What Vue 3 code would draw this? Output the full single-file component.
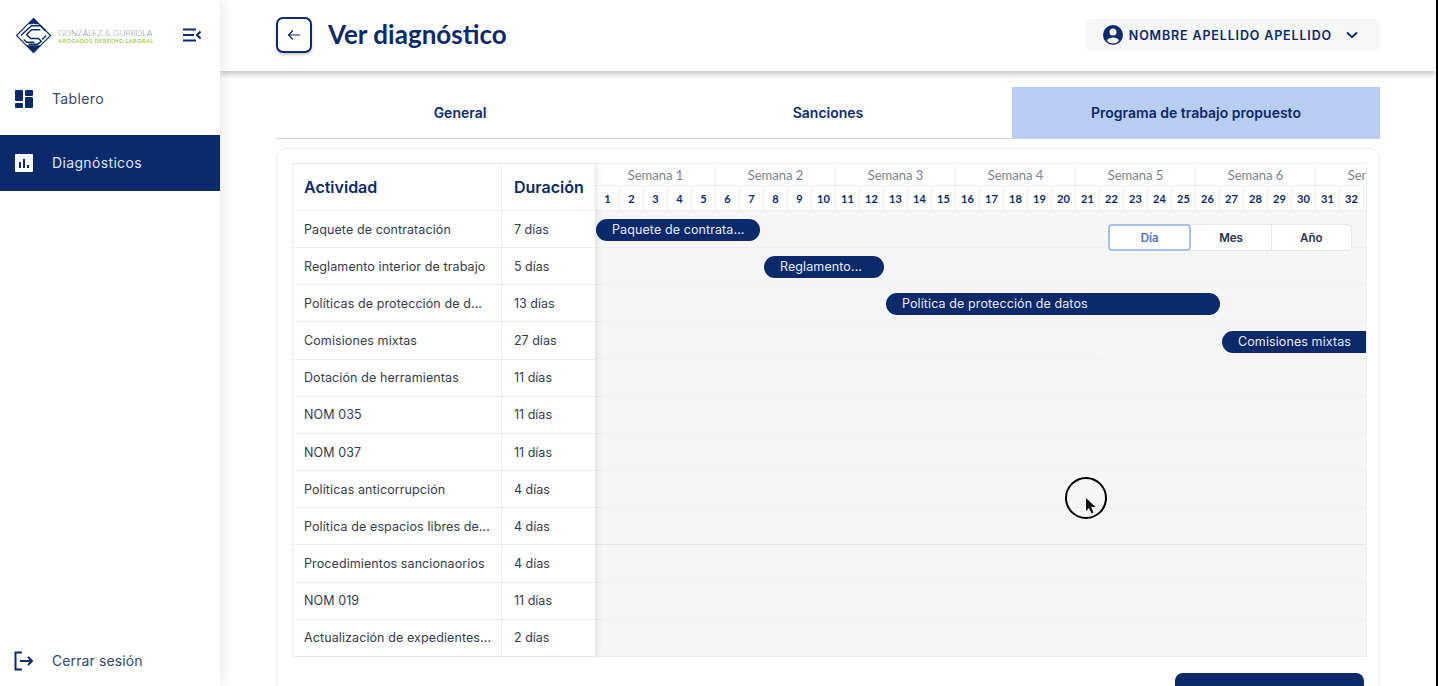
<template>
  <div class="app">
    <aside class="sidebar">
      <div class="brand">
        <svg class="logo" viewBox="0 0 38 38" width="37" height="37">
          <path d="M19 1.500 36.500 19 19 36.500 1.500 19Z" fill="#fff" stroke="#0a2a6c" stroke-width="1.200" />
          <path d="M19 1 25 7.500H20L19 6.500 18 7.500H13Z" fill="#0a2a6c" />
          <path d="M11 29H27L19 37Z" fill="#0a2a6c" />
          <path d="M6 19 17 9H26L31 14" fill="none" stroke="#0a2a6c" stroke-width="1.500" />
          <path d="M26 13H17L12 18 16 22H24L27 25 23 28H14" fill="none" stroke="#0a2a6c" stroke-width="1.500" />
          <path d="M9 23 12 26H20M32 19 28 23" fill="none" stroke="#0a2a6c" stroke-width="1.500" />
        </svg>
        <div class="brand-text">
          <div class="brand-name">GONZÁLEZ &amp; GURROLA</div>
          <div class="brand-sub">ABOGADOS DERECHO LABORAL</div>
        </div>
        <svg class="collapse" viewBox="0 0 18 14" width="18" height="14">
          <path d="M0 1.500h13M0 7h11M0 12.500h13" stroke="#0a2a6c" stroke-width="2" fill="none" />
          <path d="M17.500 3.500 14 7l3.500 3.500" stroke="#0a2a6c" stroke-width="2" fill="none" />
        </svg>
      </div>

      <nav class="nav">
        <a class="nav-item">
          <svg viewBox="0 0 18 18" width="18" height="18">
            <path fill="#0a2a6c" d="M0 1a1 1 0 0 1 1-1h6a1 1 0 0 1 1 1v9a1 1 0 0 1-1 1H1a1 1 0 0 1-1-1ZM10 1a1 1 0 0 1 1-1h6a1 1 0 0 1 1 1v4a1 1 0 0 1-1 1h-6a1 1 0 0 1-1-1ZM10 8a1 1 0 0 1 1-1h6a1 1 0 0 1 1 1v9a1 1 0 0 1-1 1h-6a1 1 0 0 1-1-1ZM0 14a1 1 0 0 1 1-1h6a1 1 0 0 1 1 1v3a1 1 0 0 1-1 1H1a1 1 0 0 1-1-1Z" />
          </svg>
          <span>Tablero</span>
        </a>
        <a class="nav-item active">
          <svg viewBox="0 0 18 18" width="18" height="18">
            <path fill="#fff" fill-rule="evenodd" d="M1 0h16a1 1 0 0 1 1 1v16a1 1 0 0 1-1 1H1a1 1 0 0 1-1-1V1a1 1 0 0 1 1-1ZM4 8v6h2V8Zm4-3v9h2V5Zm4 6v3h2v-3Z" />
          </svg>
          <span>Diagnósticos</span>
        </a>
      </nav>

      <a class="nav-item logout">
        <svg viewBox="0 0 20 20" width="20" height="20">
          <path d="M8 1.500H1.500v17H8" stroke="#0a2a6c" stroke-width="2" fill="none" />
          <path d="M6 10h12M14 6l4 4-4 4" stroke="#0a2a6c" stroke-width="2" fill="none" />
        </svg>
        <span>Cerrar sesión</span>
      </a>
    </aside>

    <div class="main">
      <header class="topbar">
        <button class="back">
          <svg viewBox="0 0 14 12" width="14" height="12">
            <path d="M13 6H1.500M6 1.500 1.500 6 6 10.500" stroke="#0a2a6c" stroke-width="1.200" fill="none" />
          </svg>
        </button>
        <h1>Ver diagnóstico</h1>
        <div class="user">
          <svg viewBox="0 0 20 20" width="20" height="20">
            <path fill="#0a2a6c" fill-rule="evenodd" d="M10 0a10 10 0 1 1 0 20 10 10 0 0 1 0-20Zm0 3.600a3.500 3.500 0 1 0 0 7 3.500 3.500 0 0 0 0-7ZM3.800 15.400a7.800 7.800 0 0 0 12.400 0c-1-1.900-3.600-3-6.200-3s-5.200 1.100-6.200 3Z" />
          </svg>
          <span>NOMBRE APELLIDO APELLIDO</span>
          <svg class="chev" viewBox="0 0 12 8" width="12" height="8">
            <path d="M1 1.500 6 6.200 11 1.500" stroke="#0a2a6c" stroke-width="2" fill="none" />
          </svg>
        </div>
      </header>

      <section class="content">
        <div class="tabs">
          <div v-for="tab in tabs" :key="tab" class="tab" :class="{ selected: tab === activeTab }">{{ tab }}</div>
        </div>

        <div class="card">
          <div class="gantt">
            <div class="list">
              <div class="list-head">
                <div class="col-name">Actividad</div>
                <div class="col-dur">Duración</div>
              </div>
              <div v-for="row in rows" :key="row.name" class="list-row">
                <div class="col-name">{{ row.name }}</div>
                <div class="col-dur">{{ row.days }}</div>
              </div>
            </div>

            <div class="chart">
              <div class="weeks">
                <div v-for="w in weeks" :key="w" class="week">{{ w }}</div>
              </div>
              <div class="days">
                <div v-for="d in days" :key="d" class="day">{{ d }}</div>
              </div>
              <div
                v-for="(row, i) in rows"
                :key="row.name"
                class="chart-row"
                :class="{ cut: i === 3, heavy: i === 8 }"
              >
                <div
                  v-if="row.bar"
                  class="bar"
                  :style="{ marginLeft: row.bar.left + 'px', width: row.bar.width + 'px' }"
                >{{ row.bar.label }}</div>
              </div>

              <div class="scale">
                <div class="scale-btn on">Día</div>
                <div class="scale-btn">Mes</div>
                <div class="scale-btn">Año</div>
              </div>
            </div>
          </div>

          <div class="actions">
            <button class="primary"></button>
          </div>
        </div>
      </section>
    </div>

    <div class="pointer">
      <svg viewBox="0 0 10 16" width="10" height="16">
        <path d="M0 0v13l3-3 2.500 5.500 2-1L5 9h4.500Z" fill="#111" />
      </svg>
    </div>
  </div>
</template>

<script setup>
const tabs = ['General', 'Sanciones', 'Programa de trabajo propuesto']
const activeTab = 'Programa de trabajo propuesto'

const weeks = ['Semana 1', 'Semana 2', 'Semana 3', 'Semana 4', 'Semana 5', 'Semana 6', 'Semana 7']
const days = Array.from({ length: 33 }, (_, i) => i + 1)

const rows = [
  { name: 'Paquete de contratación', days: '7 días', bar: { label: 'Paquete de contrata...', left: 1, width: 164 } },
  { name: 'Reglamento interior de trabajo', days: '5 días', bar: { label: 'Reglamento...', left: 169, width: 120 } },
  { name: 'Políticas de protección de d...', days: '13 días', bar: { label: 'Política de protección de datos', left: 291, width: 334 } },
  { name: 'Comisiones mixtas', days: '27 días', bar: { label: 'Comisiones mixtas', left: 627, width: 180 } },
  { name: 'Dotación de herramientas', days: '11 días' },
  { name: 'NOM 035', days: '11 días' },
  { name: 'NOM 037', days: '11 días' },
  { name: 'Políticas anticorrupción', days: '4 días' },
  { name: 'Política de espacios libres de...', days: '4 días' },
  { name: 'Procedimientos sancionaorios', days: '4 días' },
  { name: 'NOM 019', days: '11 días' },
  { name: 'Actualización de expedientes...', days: '2 días' }
]
</script>

<style>
html,
body {
  margin: 0;
  height: 100%;
  overflow: hidden;
  background: #fff;
}
</style>

<style scoped>
.app {
  position: relative;
  display: flex;
  width: 1438px;
  height: 686px;
  overflow: hidden;
  box-sizing: border-box;
  border-right: 2px solid #000;
  background: #fff;
  font-family: "Inter", "Noto Sans", sans-serif;
  color: #0a2a6c;
}

.sidebar {
  position: relative;
  z-index: 2;
  display: flex;
  flex-direction: column;
  flex: 0 0 220px;
  background: #fff;
  box-shadow: 4px 0 10px rgba(0, 0, 0, 0.07);
}

.brand {
  display: flex;
  align-items: center;
  height: 71px;
  padding: 0 0 1px 15px;
  box-sizing: border-box;
}

.logo {
  flex: none;
}

.brand-text {
  margin: 3px 0 0 6px;
  width: 95px;
}

.brand-name {
  font-family: "Lato", sans-serif;
  font-size: 8.500px;
  font-weight: 300;
  line-height: 9px;
  color: #8a8f98;
  white-space: nowrap;
}

.brand-sub {
  font-family: "Lato", sans-serif;
  font-size: 5.400px;
  font-weight: 700;
  letter-spacing: 0.5px;
  line-height: 7px;
  color: #9ccb4c;
  white-space: nowrap;
}

.collapse {
  margin-left: 30px;
}

.nav {
  flex: 1;
}

.nav-item {
  display: flex;
  align-items: center;
  gap: 19px;
  height: 56px;
  padding: 0 0 1px 15px;
  box-sizing: border-box;
  font-size: 14px;
  letter-spacing: 0.35px;
  color: #36476e;
}

.nav-item.active {
  margin-top: 8px;
  background: #0a2a6c;
  color: #dfe5f2;
}

.logout {
  height: 50px;
  gap: 18px;
  padding-left: 14px;
  letter-spacing: 0.1px;
}

.main {
  flex: 1;
  min-width: 0;
}

.topbar {
  position: relative;
  z-index: 1;
  display: flex;
  align-items: center;
  height: 71px;
  padding: 0 56px 1px 56px;
  box-sizing: border-box;
  background: #fff;
  box-shadow: 0 3px 6px rgba(0, 0, 0, 0.25);
}

.back {
  display: flex;
  align-items: center;
  justify-content: center;
  width: 36px;
  height: 36px;
  padding: 0;
  background: #fff;
  border: 2px solid #0a2a6c;
  border-radius: 7px;
  box-shadow: 0 2px 3px rgba(0, 0, 0, 0.2);
}

h1 {
  flex: 1;
  margin: -2px 0 0 16px;
  font-family: "Lato", sans-serif;
  font-size: 26px;
  font-weight: 700;
  color: #0a2a6c;
}

.user {
  display: flex;
  align-items: center;
  height: 32px;
  padding: 0 22px 0 18px;
  background: #f6f6f7;
  border-radius: 6px;
  font-size: 12.500px;
  font-weight: 600;
  letter-spacing: 0.85px;
}

.user span {
  margin: 0 14px 0 6px;
}

.content {
  padding: 16px 56px 0 56px;
}

.tabs {
  display: grid;
  grid-template-columns: 368px 368px 368px;
  border-bottom: 1px solid #cfd1d6;
}

.tab {
  display: flex;
  align-items: center;
  justify-content: center;
  height: 51px;
  font-size: 14px;
  font-weight: 600;
  padding-bottom: 1px;
  box-sizing: border-box;
}

.tab.selected {
  background: #b9cdf3;
}

.card {
  margin-top: 9px;
  padding: 14px 14px 0 15px;
  border: 1px solid #eceef1;
  border-radius: 10px 10px 0 0;
}

.gantt {
  display: flex;
  width: 1075px;
  border: 1px solid #eceef1;
  box-sizing: border-box;
}

.list {
  flex: 0 0 302px;
  position: relative;
  z-index: 1;
  box-shadow: 3px 0 5px rgba(0, 0, 0, 0.07);
}

.list-head,
.list-row {
  display: flex;
  background: #fff;
  border-bottom: 1px solid #eceef1;
  box-sizing: border-box;
}

.list-head {
  height: 47px;
  font-size: 16px;
  font-weight: 600;
}

.list-row {
  height: 37.170px;
  font-size: 12.500px;
  letter-spacing: 0.1px;
  color: #333c4e;
}

.list-row:last-child {
  height: 36.170px;
  border-bottom: 0;
}

.col-name,
.col-dur {
  display: flex;
  align-items: center;
  padding-left: 11px;
  white-space: nowrap;
}

.col-name {
  flex: 0 0 197px;
  border-right: 1px solid #eceef1;
}

.list-row .col-dur {
  letter-spacing: 0;
}

.col-dur {
  padding-left: 12px;
}

.chart {
  position: relative;
  flex: 1;
  min-width: 0;
  overflow: hidden;
  background: #f5f5f6;
}

.weeks,
.days {
  display: flex;
  width: max-content;
  margin-left: 1px;
  background: #fff;
}

.weeks {
  height: 22px;
}

.week {
  display: flex;
  align-items: center;
  justify-content: center;
  box-sizing: border-box;
  width: 120px;
  border-right: 1px solid #eceef1;
  border-bottom: 1px solid #eceef1;
  font-family: "Lato", sans-serif;
  font-size: 13px;
  color: #7b7f87;
}

.days {
  height: 25px;
}

.day {
  display: flex;
  align-items: center;
  justify-content: center;
  box-sizing: border-box;
  width: 24px;
  border-right: 1px solid #eceef1;
  border-bottom: 1px solid #eceef1;
  font-family: "Lato", sans-serif;
  font-size: 11px;
  font-weight: 700;
}

.chart-row {
  display: flex;
  align-items: center;
  height: 37.170px;
  padding-top: 2px;
  box-sizing: border-box;
  border-bottom: 1px solid #eceef1;
}

.chart-row:nth-last-child(2) {
  height: 36.170px;
  border-bottom: 0;
}

.chart-row.cut {
  border-bottom-color: transparent;
  background: linear-gradient(#eceef1, #eceef1) 0 100% / 508px 1px no-repeat;
}

.chart-row.heavy {
  border-bottom-color: #e6e7ea;
}

.bar {
  flex: none;
  box-sizing: border-box;
  height: 22px;
  padding-left: 16px;
  border-radius: 11px;
  background: #0a2a6c;
  color: #e6eaf4;
  font-size: 12.500px;
  letter-spacing: 0.1px;
  line-height: 22px;
  white-space: nowrap;
  overflow: hidden;
}

.scale {
  position: absolute;
  top: 60px;
  left: 513px;
  display: flex;
  width: 244px;
  height: 27px;
  box-sizing: border-box;
  background: #fff;
  border: 1px solid #e6e7ea;
  border-radius: 4px;
  font-size: 11.500px;
  font-weight: 600;
}

.scale-btn {
  flex: 1;
  display: flex;
  align-items: center;
  justify-content: center;
  border-right: 1px solid #e6e7ea;
  color: #27334d;
}

.scale-btn:last-child {
  border-right: 0;
}

.scale-btn.on {
  margin: -1px 0 -1px -1px;
  border: 2px solid #a9c0ec;
  border-radius: 4px;
  color: #4a72c8;
}

.actions {
  display: flex;
  justify-content: flex-end;
  padding: 16px 1px 0 0;
}

.primary {
  width: 189px;
  height: 40px;
  border: 0;
  border-radius: 8px;
  background: #0a2a6c;
}

.pointer {
  position: absolute;
  left: 1065px;
  top: 477px;
  width: 42px;
  height: 42px;
  box-sizing: border-box;
  border: 2px solid #000;
  border-radius: 50%;
}

.pointer svg {
  position: absolute;
  left: 19px;
  top: 19px;
}
</style>
